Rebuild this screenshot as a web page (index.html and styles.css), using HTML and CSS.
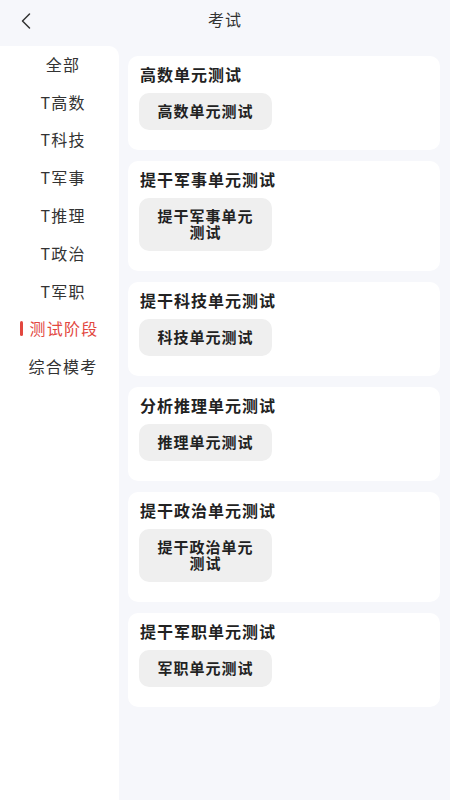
FILE: index.html
```html
<!DOCTYPE html>
<html lang="zh">
<head>
<meta charset="utf-8">
<title>考试</title>
<link rel="stylesheet" href="styles.css">
</head>
<body>
<div class="page">
  <header class="header">
    <span class="back">
      <svg width="14" height="18" viewBox="0 0 14 18"><path d="M10.5 2 L3.5 9 L10.5 16" fill="none" stroke="#333" stroke-width="1.5" stroke-linecap="round" stroke-linejoin="round"/></svg>
    </span>
    <h1 class="title">考试</h1>
    <span class="spacer"></span>
  </header>
  <div class="body">
    <nav class="sidebar">
      <div class="nav-item">全部</div>
      <div class="nav-item">T高数</div>
      <div class="nav-item">T科技</div>
      <div class="nav-item">T军事</div>
      <div class="nav-item">T推理</div>
      <div class="nav-item">T政治</div>
      <div class="nav-item">T军职</div>
      <div class="nav-item active">测试阶段</div>
      <div class="nav-item">综合模考</div>
    </nav>
    <main class="main">
      <section class="card">
        <h2 class="card-title">高数单元测试</h2>
        <div class="tags"><span class="tag">高数单元测试</span></div>
      </section>
      <section class="card">
        <h2 class="card-title">提干军事单元测试</h2>
        <div class="tags"><span class="tag">提干军事单元测试</span></div>
      </section>
      <section class="card">
        <h2 class="card-title">提干科技单元测试</h2>
        <div class="tags"><span class="tag">科技单元测试</span></div>
      </section>
      <section class="card">
        <h2 class="card-title">分析推理单元测试</h2>
        <div class="tags"><span class="tag">推理单元测试</span></div>
      </section>
      <section class="card">
        <h2 class="card-title">提干政治单元测试</h2>
        <div class="tags"><span class="tag">提干政治单元测试</span></div>
      </section>
      <section class="card">
        <h2 class="card-title">提干军职单元测试</h2>
        <div class="tags"><span class="tag">军职单元测试</span></div>
      </section>
    </main>
  </div>
</div>
</body>
</html>
```

FILE: styles.css
```css
* { box-sizing: border-box; }
html, body {
  margin: 0;
  padding: 0;
  height: 100%;
}
body {
  background: #f6f7fb;
  font-family: "Noto Sans CJK SC", "Noto Sans", sans-serif;
  color: #222;
}
.page {
  display: flex;
  flex-direction: column;
  height: 800px;
  overflow: hidden;
}
.header {
  height: 46px;
  display: flex;
  align-items: flex-start;
  padding: 9px 0 0 19px;
  flex-shrink: 0;
}
.back {
  width: 14px;
  height: 18px;
  margin-top: 3px;
  display: flex;
}
.title {
  flex: 1;
  margin: 0;
  text-align: center;
  font-size: 16px;
  font-weight: 400;
  line-height: 20px;
  letter-spacing: 1px;
  color: #333;
  padding-right: 14px;
}
.spacer { width: 19px; }
.body {
  flex: 1;
  display: flex;
  align-items: stretch;
}
.sidebar {
  width: 119px;
  flex-shrink: 0;
  background: #fff;
  border-top-right-radius: 10px;
}
.nav-item {
  height: 37.8px;
  display: flex;
  align-items: center;
  justify-content: center;
  padding: 0 0 2px 7px;
  font-size: 16px;
  letter-spacing: 1.2px;
  color: #333;
}
.nav-item.active {
  color: #e2473f;
  padding-left: 9px;
}
.nav-item.active::before {
  content: "";
  display: inline-block;
  width: 3px;
  height: 15px;
  border-radius: 1.5px;
  background: #e2473f;
  margin-left: -10px;
  margin-right: 7px;
}
.main {
  flex: 1;
  padding: 9.5px 10px 0 9px;
  display: flex;
  flex-direction: column;
  gap: 11px;
}
.card {
  background: #fff;
  border-radius: 10px;
  padding: 8.5px 12px 20px 11px;
}
.card-title {
  margin: 0 0 7.5px 1px;
  font-size: 16px;
  line-height: 21px;
  font-weight: 700;
  letter-spacing: 1px;
  color: #222;
}
.tags {
  display: flex;
}
.tag {
  width: 133px;
  padding: 10.5px 16px;
  background: #efefef;
  border-radius: 10px;
  font-size: 15px;
  line-height: 16px;
  font-weight: 700;
  letter-spacing: 1px;
  text-align: center;
  color: #222;
}
```
